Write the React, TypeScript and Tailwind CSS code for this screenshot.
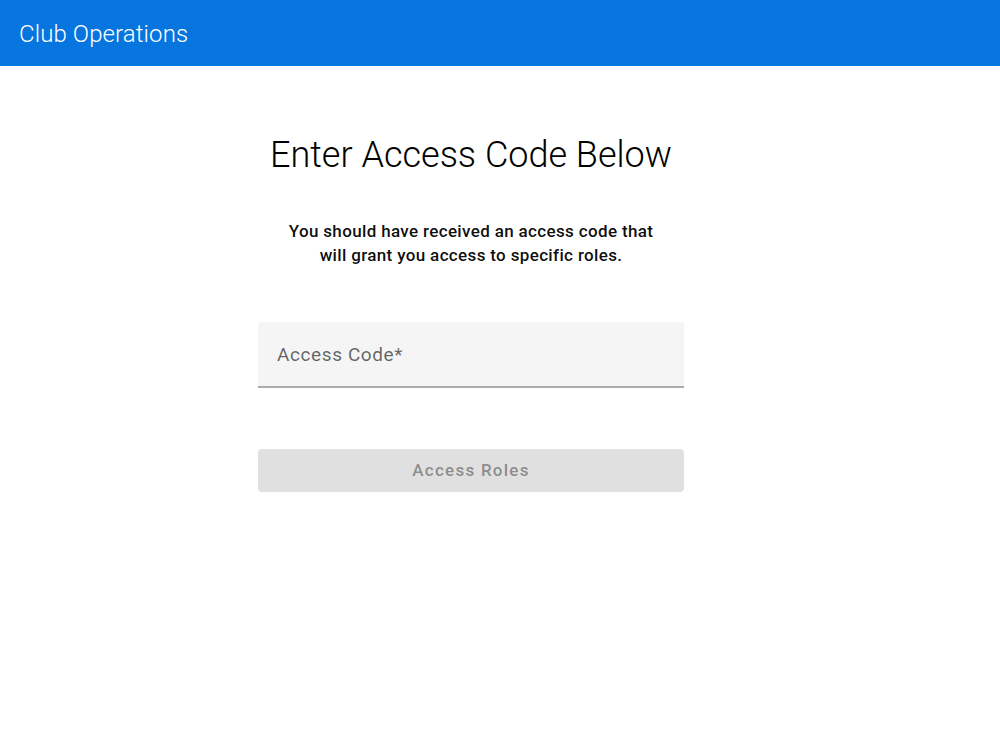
export default function App() {
  return (
    <div className="min-h-[750px] bg-white" style={{ fontFamily: "Roboto, 'Liberation Sans', sans-serif" }}>
      <header className="h-[66px] bg-[#0675df] flex items-center px-[19px]">
        <h1 className="text-white text-[24px] font-light tracking-[0.1px] pt-[2px]">Club Operations</h1>
      </header>
      <main className="ml-[258px] w-[426px] flex flex-col items-center pt-[67px]">
        <h2 className="text-[36px] leading-[44px] font-light text-black">Enter Access Code Below</h2>
        <p className="mt-[42px] text-center text-[17px] leading-[24px] font-medium tracking-[0.35px] text-black/95">
          You should have received an access code that
          <br />
          will grant you access to specific roles.
        </p>
        <div className="mt-[55px] w-full h-[66px] bg-[#f5f5f5] rounded-t-[4px] border-b-2 border-[#ababab] flex items-center px-[19px] pt-[3px]">
          <span className="text-[19px] tracking-[0.6px] text-black/60">Access Code*</span>
        </div>
        <button
          disabled
          className="mt-[61px] w-full h-[43px] rounded-[4px] bg-[#e0e0e0] text-[17px] font-medium tracking-[1.25px] text-black/40"
        >
          Access Roles
        </button>
      </main>
    </div>
  );
}
